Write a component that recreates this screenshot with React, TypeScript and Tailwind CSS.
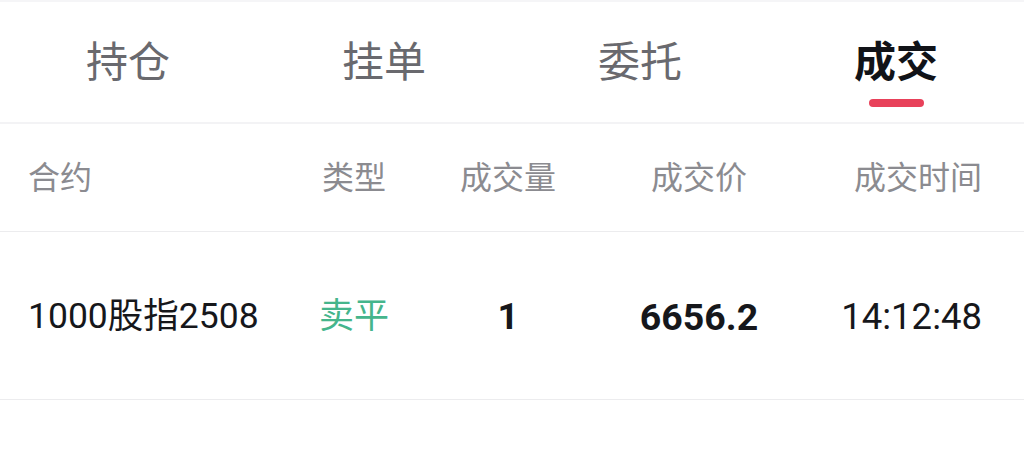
import { useState } from 'react';

const tabs = ['持仓', '挂单', '委托', '成交'];

const columns = ['合约', '类型', '成交量', '成交价', '成交时间'];

const trades = [{ contract: '1000股指2508', side: '卖平', volume: '1', price: '6656.2', time: '14:12:48' }];

const cjk = "font-['Roboto','Noto_Sans_CJK_SC',sans-serif]";

export default function App() {
  const [active, setActive] = useState(3);

  return (
    <div className={`w-[1024px] h-[466px] bg-white ${cjk}`}>
      <div className="h-[2px] bg-[#f5f5f7]" />

      {/* Tabs */}
      <div className="grid grid-cols-4 h-[120px]">
        {tabs.map((tab, i) => (
          <button key={tab} onClick={() => setActive(i)} className="flex flex-col items-center pt-[38px]">
            <span
              className={`text-[42px] leading-[46px] ${
                active === i ? 'font-bold text-[#111318]' : 'text-[#69696e]'
              }`}
            >
              {tab}
            </span>
            <span className={`mt-[13px] h-[8px] w-[55px] rounded-full ${active === i ? 'bg-[#e8415a]' : ''}`} />
          </button>
        ))}
      </div>
      <div className="h-[2px] bg-[#f3f3f5]" />

      {/* Table header */}
      <div className="grid grid-cols-[272px_108px_200px_182px_192px] pl-[28px] h-[108px] items-center text-[32px] text-[#8b8b90] border-b border-[#ececee]">
        <span className="text-left">{columns[0]}</span>
        <span className="text-center">{columns[1]}</span>
        <span className="text-center">{columns[2]}</span>
        <span className="text-center">{columns[3]}</span>
        <span className="text-right">{columns[4]}</span>
      </div>

      {/* Rows */}
      {trades.map((t) => (
        <div
          key={t.contract + t.time}
          className="grid grid-cols-[272px_108px_200px_182px_192px] pl-[28px] pt-[3px] h-[168px] items-center border-b border-[#ececee] text-[#16171b]"
        >
          <span className="text-left text-[35.5px]">{t.contract}</span>
          <span className="text-center text-[35px] text-[#45b58c]">{t.side}</span>
          <span className="text-center text-[37px] font-bold">{t.volume}</span>
          <span className="text-center text-[37.5px] font-bold">{t.price}</span>
          <span className="text-right text-[36.5px]">{t.time}</span>
        </div>
      ))}
    </div>
  );
}
